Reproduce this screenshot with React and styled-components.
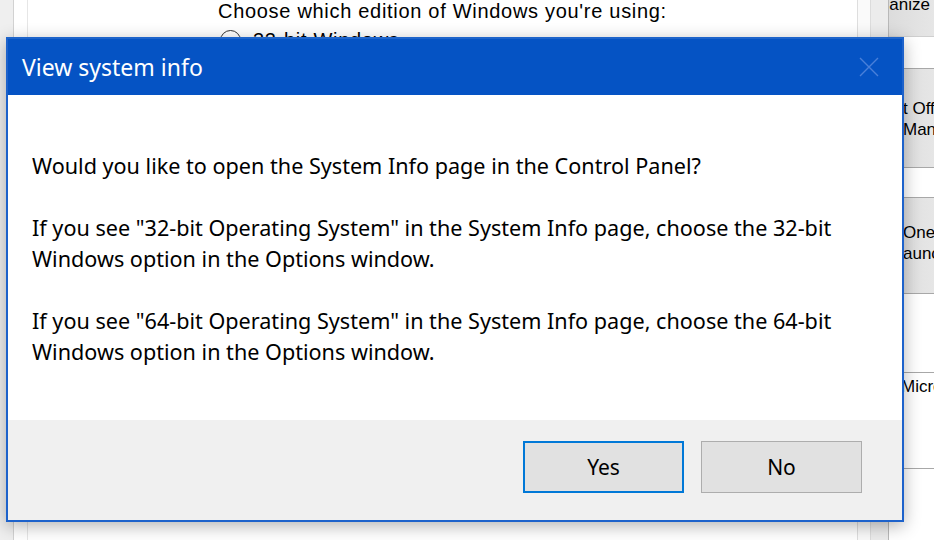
import React from 'react';
import styled, { createGlobalStyle } from 'styled-components';

const GlobalStyle = createGlobalStyle`
  html, body {
    margin: 0;
    padding: 0;
    background: #ffffff;
  }
  * {
    box-sizing: border-box;
  }
`;

const sideRows = [
  { tone: 'gray', height: 37, pad: -6, lines: ['Organize'], shift: -42 },
  { tone: 'white', height: 32, pad: 0, lines: [] },
  { tone: 'gray', height: 99, pad: 29, lines: ['t Office', 'Manager'], shift: 0 },
  { tone: 'white', height: 30, pad: 0, lines: [] },
  { tone: 'gray', height: 96, pad: 24, lines: ['OneDrive', 'aunch'], shift: 0 },
  { tone: 'white', height: 79, pad: 0, lines: [] },
  { tone: 'white', height: 96, pad: 3, lines: ['Microsoft'], shift: -2 },
];

const App = () => {
  return (
    <>
      <GlobalStyle />
      <Screen>
        <Window>
          <LeftRail />
          <LeftPad />
          <Content>
            <Prompt>Choose which edition of Windows you're using:</Prompt>
            <RadioRow>
              <Radio />
              <RadioLabel>32-bit Windows</RadioLabel>
            </RadioRow>
          </Content>
          <RightPad />
          <RightStrip />
          <SidePanel>
            {sideRows.map((row, i) => (
              <SideRow key={i} tone={row.tone} h={row.height} pad={row.pad}>
                {row.lines.map((line) => (
                  <SideText key={line} shift={row.shift}>
                    {line}
                  </SideText>
                ))}
              </SideRow>
            ))}
          </SidePanel>
        </Window>

        <Dialog role="dialog" aria-label="View system info">
          <TitleBar>
            <Title>View system info</Title>
            <CloseButton aria-label="Close">
              <svg width="20" height="20" viewBox="0 0 20 20">
                <path d="M1 1 L19 19 M19 1 L1 19" stroke="#4a7fd9" strokeWidth="1.4" fill="none" />
              </svg>
            </CloseButton>
          </TitleBar>
          <Body>
            <Paragraph>Would you like to open the System Info page in the Control Panel?</Paragraph>
            <Paragraph>
              If you see "32-bit Operating System" in the System Info page, choose the 32-bit Windows option in the
              Options window.
            </Paragraph>
            <Paragraph>
              If you see "64-bit Operating System" in the System Info page, choose the 64-bit Windows option in the
              Options window.
            </Paragraph>
          </Body>
          <Footer>
            <DialogButton primary>Yes</DialogButton>
            <DialogButton>No</DialogButton>
          </Footer>
        </Dialog>
      </Screen>
    </>
  );
};

export default App;

const Screen = styled.div`
  position: relative;
  width: 934px;
  height: 540px;
  overflow: hidden;
`;

const Window = styled.div`
  display: flex;
  height: 100%;
  background: #ffffff;
`;

const LeftRail = styled.div`
  width: 14px;
  flex-shrink: 0;
  background: #efefef;
  border-right: 1px solid #d2d2d2;
`;

const LeftPad = styled.div`
  width: 14px;
  flex-shrink: 0;
  background: #ffffff;
  border-right: 1px solid #e6e6e6;
`;

const Content = styled.div`
  flex: 1;
  min-width: 0;
  padding-left: 190px;
  font-family: 'Liberation Sans', Arial, sans-serif;
  color: #000000;
`;

const Prompt = styled.div`
  font-size: 20px;
  line-height: 22px;
  letter-spacing: 0.7px;
  white-space: nowrap;
`;

const RadioRow = styled.div`
  display: flex;
  align-items: center;
  gap: 12px;
  margin-top: 7px;
  padding-left: 2px;
`;

const Radio = styled.span`
  width: 21px;
  height: 21px;
  border-radius: 50%;
  border: 1.5px solid #333333;
  background: #ffffff;
`;

const RadioLabel = styled.span`
  font-size: 20px;
  line-height: 22px;
  letter-spacing: 0.7px;
`;

const RightPad = styled.div`
  width: 14px;
  flex-shrink: 0;
  background: #fafafa;
  border-left: 1px solid #dedede;
  border-right: 1px solid #dcdcdc;
`;

const RightStrip = styled.div`
  width: 18px;
  flex-shrink: 0;
  background: #ececec;
  border-right: 1px solid #b8b8b8;
`;

const SidePanel = styled.div`
  width: 45px;
  flex-shrink: 0;
  display: flex;
  flex-direction: column;
  overflow: hidden;
  font-family: 'Liberation Sans', Arial, sans-serif;
  font-size: 17px;
  line-height: 21px;
  color: #000000;
`;

const SideRow = styled.div`
  height: ${(p) => p.h}px;
  flex-shrink: 0;
  padding-top: ${(p) => Math.max(p.pad, 0)}px;
  background: ${(p) => (p.tone === 'gray' ? 'linear-gradient(90deg, #dcdcdc, #e6e6e6)' : '#ffffff')};
  border-bottom: 1px solid #a8a8a8;
  overflow: hidden;

  &:first-child {
    border-bottom-color: #cfcfcf;
    padding-top: 0;
    margin-top: ${(p) => Math.min(p.pad, 0)}px;
    height: ${(p) => p.h - p.pad}px;
  }
`;

const SideText = styled.div`
  white-space: nowrap;
  padding-left: 14px;
  margin-left: ${(p) => p.shift || 0}px;
`;

const Dialog = styled.div`
  position: absolute;
  left: 6px;
  top: 37px;
  width: 898px;
  height: 485px;
  display: flex;
  flex-direction: column;
  border: 2px solid #1d62cb;
  border-top-color: #1e64ca;
  background: #ffffff;
  box-shadow: 0 4px 16px rgba(0, 0, 0, 0.3);
  font-family: 'Noto Sans', 'Open Sans', sans-serif;
`;

const TitleBar = styled.div`
  height: 56px;
  flex-shrink: 0;
  display: flex;
  align-items: center;
  justify-content: space-between;
  padding: 0 23px 0 14px;
  background: #0553c4;
`;

const Title = styled.div`
  color: #ffffff;
  font-size: 23px;
  line-height: 28px;
`;

const CloseButton = styled.div`
  width: 20px;
  height: 20px;
  display: flex;
`;

const Body = styled.div`
  height: 325px;
  flex-shrink: 0;
  padding: 55px 24px 0;
  background: #ffffff;
`;

const Paragraph = styled.p`
  margin: 0 0 31px;
  font-size: 21.6px;
  line-height: 31px;
  color: #000000;
`;

const Footer = styled.div`
  flex: 1;
  display: flex;
  justify-content: flex-end;
  align-items: flex-start;
  gap: 17px;
  padding: 21px 40px 0 0;
  background: #f0f0f0;
`;

const DialogButton = styled.button`
  width: 161px;
  height: 52px;
  margin: 0;
  padding: 0;
  background: #e1e1e1;
  border: ${(p) => (p.primary ? '2px solid #0078d7' : '1px solid #adadad')};
  font-family: 'Noto Sans', 'Open Sans', sans-serif;
  font-size: 21px;
  color: #000000;
`;
